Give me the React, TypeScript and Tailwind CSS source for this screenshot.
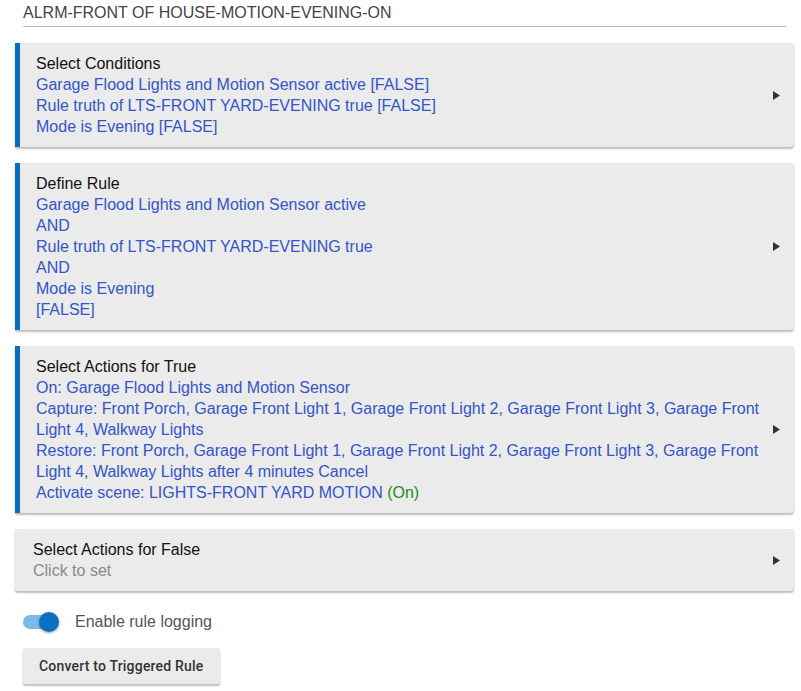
import React from "react";

const Arrow = () => (
  <svg width="7" height="9" viewBox="0 0 7 9" className="shrink-0">
    <path d="M0 0 L7 4.5 L0 9 Z" fill="#333" />
  </svg>
);

function Card({ title, children, accent = true }: { title: string; children: React.ReactNode; accent?: boolean }) {
  return (
    <div
      className={`flex items-center bg-[#ebebeb] rounded-r-[4px] shadow-[0_2px_2px_rgba(0,0,0,0.25),0_0_1px_rgba(0,0,0,0.12)] ${
        accent ? "border-l-[5px] border-[#0a6ebd] pl-4" : "pl-[18px] rounded-l-[2px]"
      } pr-[14px] py-[10px]`}
    >
      <div className="flex-1 text-[16px] leading-[21px]">
        <div className="text-[#111]">{title}</div>
        {children}
      </div>
      <Arrow />
    </div>
  );
}

export default function App() {
  return (
    <div className="bg-white min-h-[691px] w-[801px] font-['Liberation_Sans',Arial,sans-serif] pl-[15px] pr-[7px] pt-[2px]">
      <div className="ml-[8px] mr-[8px] border-b border-[#bbb] pb-[3px] text-[16px] leading-[21px] text-[#444]">
        ALRM-FRONT OF HOUSE-MOTION-EVENING-ON
      </div>
      <div className="flex flex-col gap-4 mt-[16px]">
        <Card title="Select Conditions">
          <div className="text-[#3355c8]">
            <div>Garage Flood Lights and Motion Sensor active [FALSE]</div>
            <div>Rule truth of LTS-FRONT YARD-EVENING true [FALSE]</div>
            <div>Mode is Evening [FALSE]</div>
          </div>
        </Card>
        <Card title="Define Rule">
          <div className="text-[#3355c8]">
            <div>Garage Flood Lights and Motion Sensor active</div>
            <div>AND</div>
            <div>Rule truth of LTS-FRONT YARD-EVENING true</div>
            <div>AND</div>
            <div>Mode is Evening</div>
            <div>[FALSE]</div>
          </div>
        </Card>
        <Card title="Select Actions for True">
          <div className="text-[#3355c8] pr-[10px]">
            <div>On: Garage Flood Lights and Motion Sensor</div>
            <div>
              Capture: Front Porch, Garage Front Light 1, Garage Front Light 2, Garage Front Light 3, Garage Front
              Light 4, Walkway Lights
            </div>
            <div>
              Restore: Front Porch, Garage Front Light 1, Garage Front Light 2, Garage Front Light 3, Garage Front
              Light 4, Walkway Lights after 4 minutes Cancel
            </div>
            <div>
              Activate scene: LIGHTS-FRONT YARD MOTION <span className="text-[#1a8a1a]">(On)</span>
            </div>
          </div>
        </Card>
        <Card title="Select Actions for False" accent={false}>
          <div className="text-[#8a8a8a]">Click to set</div>
        </Card>
      </div>
      <div className="flex items-center mt-[21px] ml-[8px] h-[20px]">
        <div className="relative w-[36px] h-[20px] flex items-center">
          <div className="w-[34px] h-[14px] rounded-full bg-[#7dbbe6]" />
          <div className="absolute left-[16px] top-0 w-[20px] h-[20px] rounded-full bg-[#0a70c4] shadow-[0_1px_3px_rgba(0,0,0,0.4)]" />
        </div>
        <span className="ml-[16px] text-[16px] text-[#555]">Enable rule logging</span>
      </div>
      <button className="mt-[16px] ml-[8px] h-[36px] px-[16px] bg-[#ebebeb] rounded-[2px] shadow-[0_2px_2px_rgba(0,0,0,0.25),0_0_1px_rgba(0,0,0,0.12)] font-['Roboto',sans-serif] font-medium text-[14px] tracking-[0.2px] text-[#333]">
        Convert to Triggered Rule
      </button>
    </div>
  );
}
